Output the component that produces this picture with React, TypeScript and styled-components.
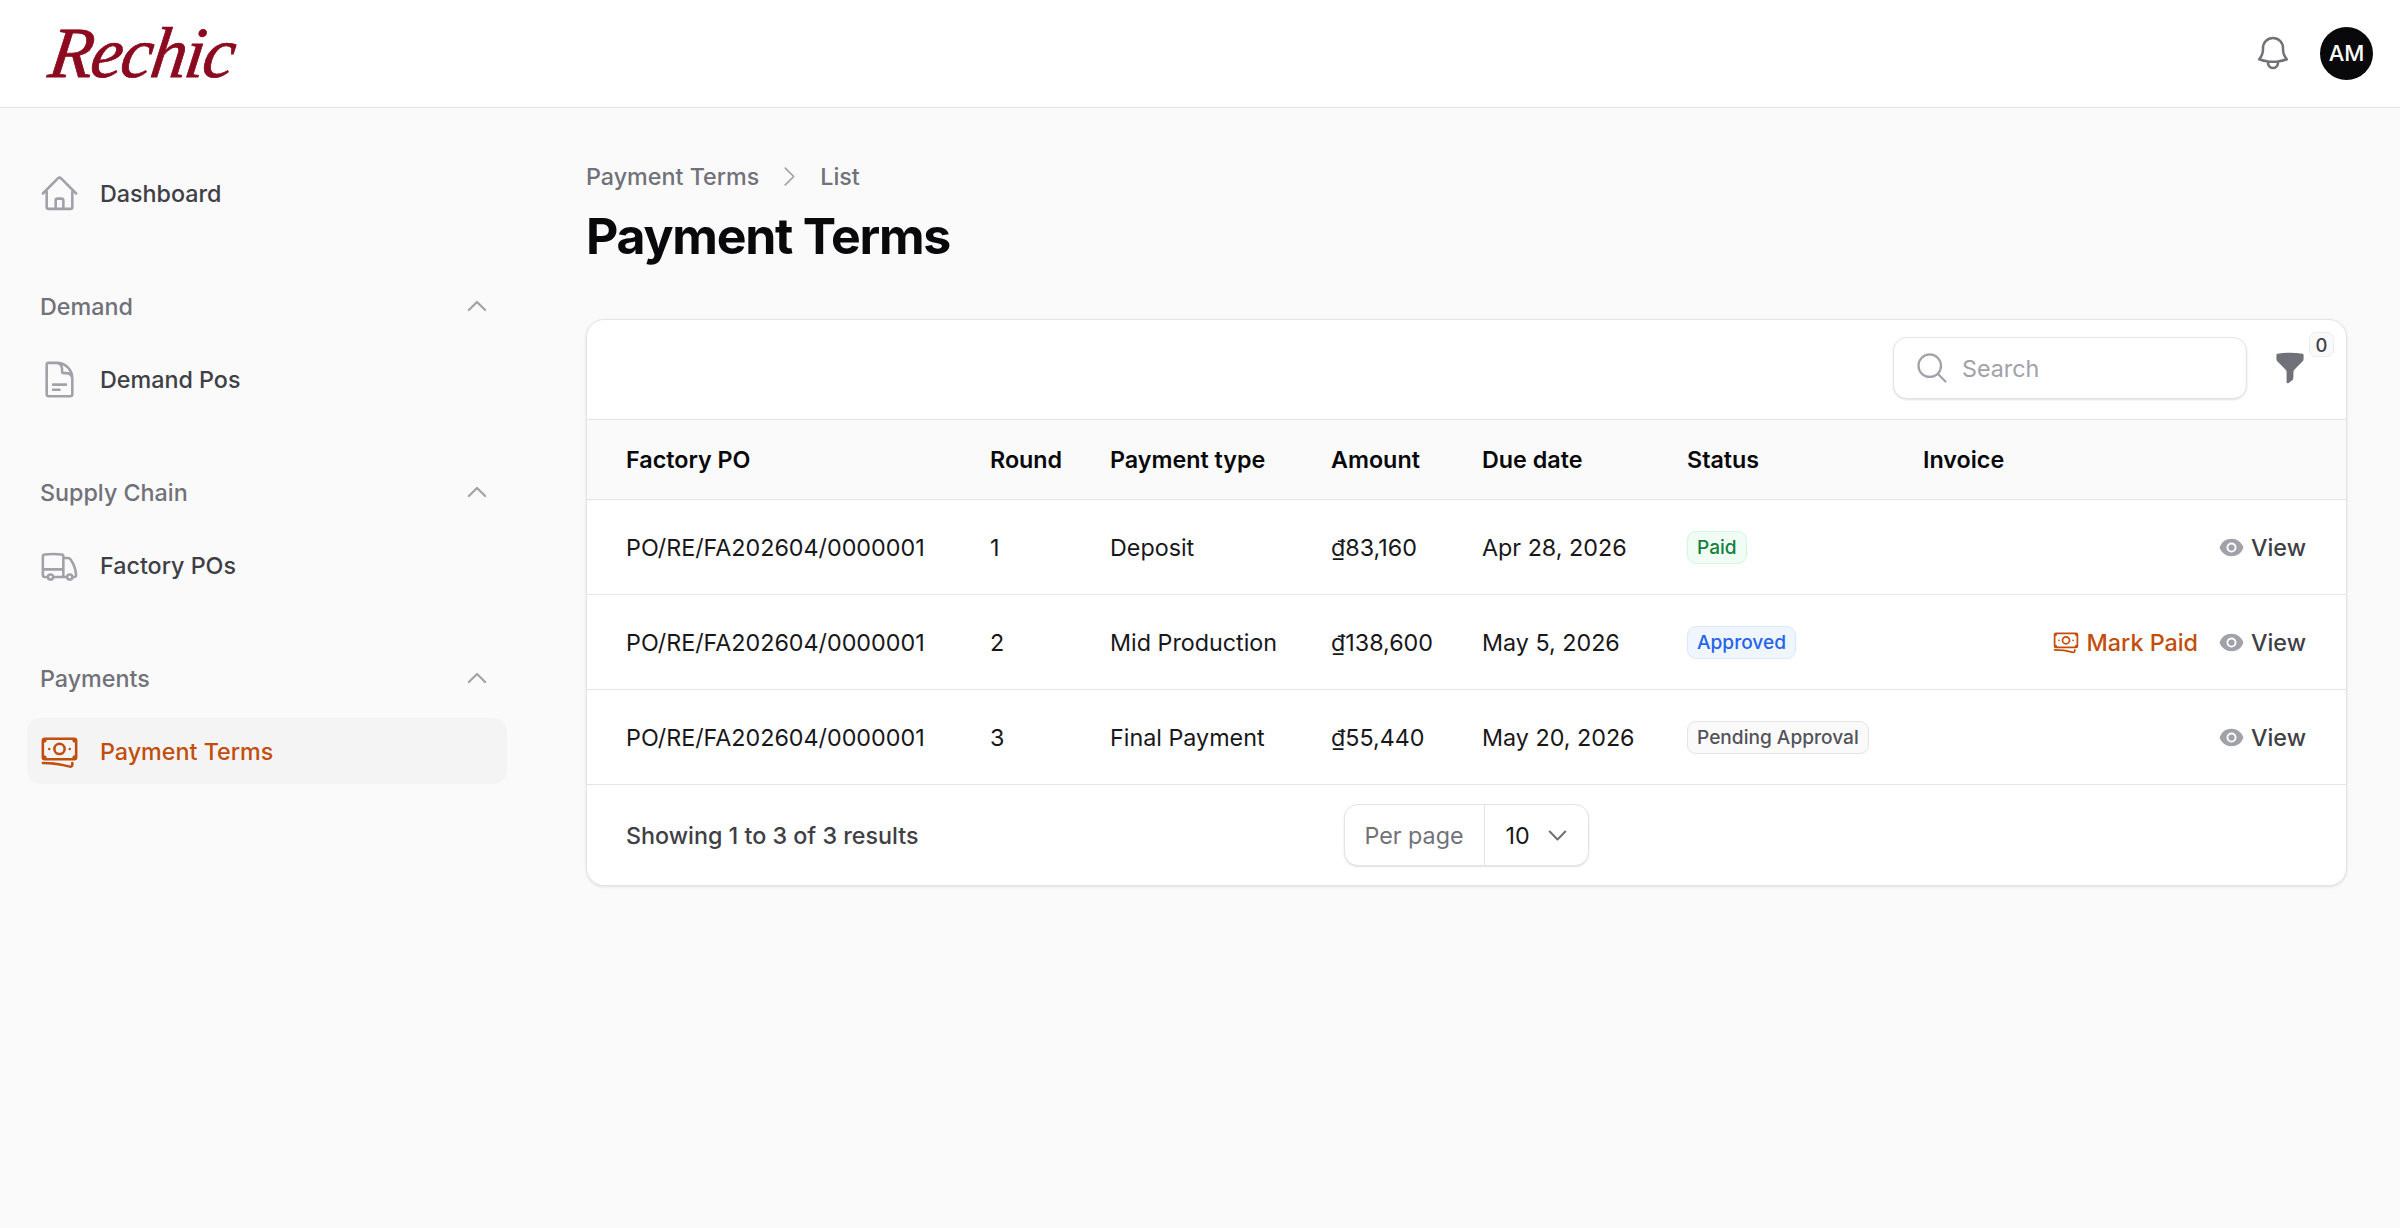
import React from "react"
import styled, { createGlobalStyle } from "styled-components"
import {
  HiOutlineBanknotes,
  HiOutlineBell,
  HiOutlineChevronDown,
  HiOutlineChevronRight,
  HiOutlineChevronUp,
  HiOutlineDocumentText,
  HiOutlineHome,
  HiOutlineMagnifyingGlass,
  HiOutlineTruck,
  HiMiniEye,
  HiMiniFunnel,
} from "react-icons/hi2"

const accent = "#c24e0c"
const textSize = "23.3px"

const GlobalStyle = createGlobalStyle`
  * {
    box-sizing: border-box;
  }
  html, body {
    margin: 0;
    background: #fafafa;
    font-family: Inter, "Liberation Sans", sans-serif;
    font-size: ${textSize};
    color: #18181b;
  }
`

const Page = styled.div`
  min-height: 100vh;
  display: flex;
  flex-direction: column;
`

const Topbar = styled.header`
  height: 108px;
  flex: none;
  display: flex;
  align-items: center;
  justify-content: space-between;
  padding: 0 27px 1px 50px;
  background: #fff;
  border-bottom: 1px solid #e4e4e7;
`

const Logo = styled.div`
  font-family: "Liberation Serif", serif;
  font-style: italic;
  font-size: 72px;
  line-height: 1;
  letter-spacing: -2px;
  color: #8c0a20;
  -webkit-text-stroke: 0.8px #8c0a20;
  transform: skewX(-8deg);
`

const TopActions = styled.div`
  display: flex;
  align-items: center;
  gap: 27px;
`

const BellButton = styled.span`
  display: flex;
  font-size: 40px;
  color: #71717a;
`

const Avatar = styled.div`
  width: 53px;
  height: 53px;
  border-radius: 50%;
  background: #09090b;
  color: #fff;
  display: flex;
  align-items: center;
  justify-content: center;
  font-size: 22px;
  font-weight: 500;
`

const Body = styled.div`
  flex: 1;
  display: flex;
`

const Sidebar = styled.nav`
  width: 534px;
  flex: none;
  padding: 52px 27px;
  display: flex;
  flex-direction: column;
  gap: 62px;
`

const NavGroup = styled.div`
  display: flex;
  flex-direction: column;
`

const GroupLabel = styled.div`
  height: 36px;
  margin-bottom: 22px;
  padding: 0 17px 0 13px;
  display: flex;
  align-items: center;
  justify-content: space-between;
  color: #71717a;
  font-weight: 500;
  svg {
    font-size: 26px;
    stroke-width: 2;
    color: #a1a1aa;
  }
`

const NavItem = styled.a<{ $active?: boolean }>`
  height: 66px;
  padding: 0 12px;
  display: flex;
  align-items: center;
  gap: 20px;
  border-radius: 14px;
  font-weight: 500;
  background: ${(p) => (p.$active ? "#f4f4f5" : "transparent")};
  color: ${(p) => (p.$active ? accent : "#3f3f46")};
  svg {
    font-size: 41px;
    flex: none;
    color: ${(p) => (p.$active ? accent : "#a1a1aa")};
  }
`

const Main = styled.main`
  flex: 1;
  min-width: 0;
  padding: 52px 53px 53px 52px;
`

const Breadcrumbs = styled.div`
  height: 32px;
  display: flex;
  align-items: center;
  gap: 17px;
  color: #71717a;
  font-weight: 500;
  svg {
    font-size: 27px;
    color: #a1a1aa;
  }
`

const Title = styled.h1`
  margin: 16px 0 55px;
  font-size: 50px;
  line-height: 56px;
  font-weight: 700;
  letter-spacing: -0.025em;
  color: #09090b;
`

const Card = styled.section`
  background: #fff;
  border: 1px solid #e4e4e7;
  border-radius: 18px;
  box-shadow: 0 1px 3px rgba(0, 0, 0, 0.1);
  overflow: hidden;
`

const Toolbar = styled.div`
  height: 99px;
  padding: 0 39px 3px 0;
  display: flex;
  align-items: center;
  justify-content: flex-end;
  gap: 26px;
`

const SearchBox = styled.label`
  width: 354px;
  height: 62px;
  padding: 0 20px;
  display: flex;
  align-items: center;
  gap: 12px;
  background: #fff;
  border: 1px solid #e4e4e7;
  border-radius: 14px;
  box-shadow: 0 1px 2px rgba(0, 0, 0, 0.12);
  svg {
    font-size: 36px;
    flex: none;
    color: #a1a1aa;
  }
`

const SearchInput = styled.input`
  flex: 1;
  min-width: 0;
  border: 0;
  outline: 0;
  padding: 0;
  background: transparent;
  font: inherit;
  color: #18181b;
  &::placeholder {
    color: #a1a1aa;
    opacity: 1;
  }
`

const FilterButton = styled.div`
  position: relative;
  display: flex;
  font-size: 34px;
  color: #71717a;
`

const FilterCount = styled.span`
  position: absolute;
  left: 36px;
  top: -19px;
  width: 25px;
  height: 25px;
  display: flex;
  align-items: center;
  justify-content: center;
  border: 1px solid #ececee;
  border-radius: 7px;
  background: #fafafa;
  color: #3f3f46;
  font-size: 18.4px;
  font-weight: 500;
`

const Table = styled.table`
  width: 100%;
  table-layout: fixed;
  border-collapse: collapse;
`

const HeadRow = styled.tr`
  height: 80px;
  background: #fafafa;
  border-top: 1px solid #e4e4e7;
  border-bottom: 1px solid #e4e4e7;
`

const HeadCell = styled.th`
  padding: 0;
  text-align: left;
  font-size: ${textSize};
  font-weight: 600;
  color: #09090b;
  white-space: nowrap;
  &:first-child {
    padding-left: 39px;
  }
`

const Row = styled.tr`
  height: 95px;
  border-bottom: 1px solid #e4e4e7;
`

const Cell = styled.td`
  padding: 0;
  color: #18181b;
  white-space: nowrap;
  &:first-child {
    padding-left: 39px;
  }
`

const ActionsCell = styled.td`
  padding: 0 40px 0 0;
`

const Actions = styled.div`
  display: flex;
  justify-content: flex-end;
  align-items: center;
  gap: 21px;
`

const Action = styled.a<{ $accent?: boolean }>`
  display: inline-flex;
  align-items: center;
  gap: 7px;
  font-weight: 500;
  color: ${(p) => (p.$accent ? accent : "#3f3f46")};
  svg {
    font-size: ${(p) => (p.$accent ? "28px" : "25px")};
    color: ${(p) => (p.$accent ? accent : "#a1a1aa")};
  }
`

type Tone = "green" | "blue" | "gray"

const toneStyles: Record<Tone, string> = {
  green: "background:#f0fdf4;border-color:#d5f5e0;color:#15803d;",
  blue: "background:#eff6ff;border-color:#dbe8fe;color:#2563eb;",
  gray: "background:#fafafa;border-color:#e4e4e7;color:#52525b;",
}

const Badge = styled.span<{ $tone: Tone }>`
  display: inline-flex;
  align-items: center;
  height: 33px;
  padding: 0 9px;
  border: 1px solid;
  border-radius: 9px;
  font-size: 19.1px;
  font-weight: 500;
  vertical-align: middle;
  ${(p) => toneStyles[p.$tone]}
`

const Footer = styled.div`
  height: 100px;
  padding: 0 40px 0 39px;
  display: grid;
  grid-template-columns: 1fr auto 1fr;
  align-items: center;
`

const ResultCount = styled.div`
  color: #3f3f46;
  font-weight: 500;
`

const PerPage = styled.div`
  height: 62px;
  display: flex;
  align-items: stretch;
  border: 1px solid #e4e4e7;
  border-radius: 14px;
  box-shadow: 0 1px 2px rgba(0, 0, 0, 0.12);
  background: #fff;
`

const PerPageLabel = styled.div`
  width: 140px;
  display: flex;
  align-items: center;
  justify-content: center;
  border-right: 1px solid #e4e4e7;
  color: #71717a;
`

const PerPageValue = styled.div`
  width: 103px;
  padding: 0 18px 0 21px;
  display: flex;
  align-items: center;
  justify-content: space-between;
  color: #18181b;
  svg {
    font-size: 25px;
    stroke-width: 2;
    color: #71717a;
  }
`

const rows = [
  { round: "1", type: "Deposit", amount: "₫83,160", due: "Apr 28, 2026", status: "Paid", tone: "green" as Tone },
  { round: "2", type: "Mid Production", amount: "₫138,600", due: "May 5, 2026", status: "Approved", tone: "blue" as Tone, payable: true },
  { round: "3", type: "Final Payment", amount: "₫55,440", due: "May 20, 2026", status: "Pending Approval", tone: "gray" as Tone },
]

const columns = [403, 120, 221, 151, 205, 236]

export default function App() {
  return (
    <Page>
      <GlobalStyle />
      <Topbar>
        <Logo>Rechic</Logo>
        <TopActions>
          <BellButton>
            <HiOutlineBell />
          </BellButton>
          <Avatar>AM</Avatar>
        </TopActions>
      </Topbar>
      <Body>
        <Sidebar>
          <NavGroup>
            <NavItem>
              <HiOutlineHome />
              Dashboard
            </NavItem>
          </NavGroup>
          <NavGroup>
            <GroupLabel>
              Demand
              <HiOutlineChevronUp />
            </GroupLabel>
            <NavItem>
              <HiOutlineDocumentText />
              Demand Pos
            </NavItem>
          </NavGroup>
          <NavGroup>
            <GroupLabel>
              Supply Chain
              <HiOutlineChevronUp />
            </GroupLabel>
            <NavItem>
              <HiOutlineTruck />
              Factory POs
            </NavItem>
          </NavGroup>
          <NavGroup>
            <GroupLabel>
              Payments
              <HiOutlineChevronUp />
            </GroupLabel>
            <NavItem $active>
              <HiOutlineBanknotes />
              Payment Terms
            </NavItem>
          </NavGroup>
        </Sidebar>
        <Main>
          <Breadcrumbs>
            <span>Payment Terms</span>
            <HiOutlineChevronRight />
            <span>List</span>
          </Breadcrumbs>
          <Title>Payment Terms</Title>
          <Card>
            <Toolbar>
              <SearchBox>
                <HiOutlineMagnifyingGlass />
                <SearchInput placeholder="Search" />
              </SearchBox>
              <FilterButton>
                <HiMiniFunnel />
                <FilterCount>0</FilterCount>
              </FilterButton>
            </Toolbar>
            <Table>
              <colgroup>
                {columns.map((width) => (
                  <col key={width} style={{ width }} />
                ))}
                <col />
              </colgroup>
              <thead>
                <HeadRow>
                  <HeadCell>Factory PO</HeadCell>
                  <HeadCell>Round</HeadCell>
                  <HeadCell>Payment type</HeadCell>
                  <HeadCell>Amount</HeadCell>
                  <HeadCell>Due date</HeadCell>
                  <HeadCell>Status</HeadCell>
                  <HeadCell>Invoice</HeadCell>
                </HeadRow>
              </thead>
              <tbody>
                {rows.map((row) => (
                  <Row key={row.round}>
                    <Cell>PO/RE/FA202604/0000001</Cell>
                    <Cell>{row.round}</Cell>
                    <Cell>{row.type}</Cell>
                    <Cell>{row.amount}</Cell>
                    <Cell>{row.due}</Cell>
                    <Cell>
                      <Badge $tone={row.tone}>{row.status}</Badge>
                    </Cell>
                    <ActionsCell>
                      <Actions>
                        {row.payable && (
                          <Action $accent>
                            <HiOutlineBanknotes />
                            Mark Paid
                          </Action>
                        )}
                        <Action>
                          <HiMiniEye />
                          View
                        </Action>
                      </Actions>
                    </ActionsCell>
                  </Row>
                ))}
              </tbody>
            </Table>
            <Footer>
              <ResultCount>Showing 1 to 3 of 3 results</ResultCount>
              <PerPage>
                <PerPageLabel>Per page</PerPageLabel>
                <PerPageValue>
                  10
                  <HiOutlineChevronDown />
                </PerPageValue>
              </PerPage>
            </Footer>
          </Card>
        </Main>
      </Body>
    </Page>
  )
}
